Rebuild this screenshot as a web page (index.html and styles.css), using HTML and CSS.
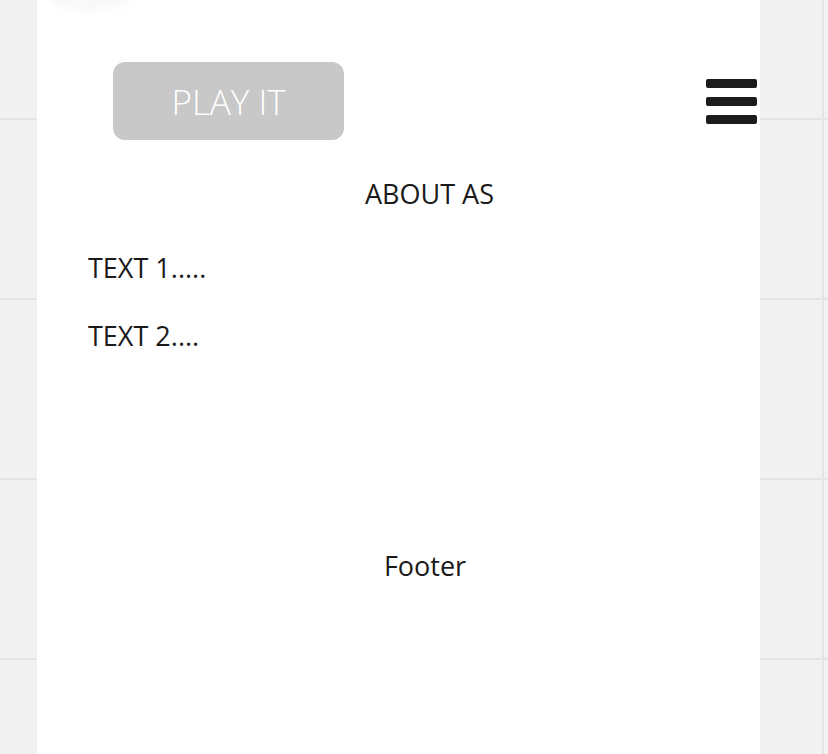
FILE: index.html
```html
<!DOCTYPE html>
<html lang="en">
<head>
<meta charset="utf-8">
<title>About</title>
<link rel="stylesheet" href="styles.css">
</head>
<body>
<div class="page">
  <div class="glow"></div>
  <header class="header">
    <button class="play">PLAY IT</button>
    <div class="burger" aria-label="menu">
      <span class="bar"></span>
      <span class="bar"></span>
      <span class="bar"></span>
    </div>
  </header>
  <main class="content">
    <h1 class="about">ABOUT AS</h1>
    <p class="text text1">TEXT 1.....</p>
    <p class="text text2">TEXT 2....</p>
  </main>
  <footer class="footer">Footer</footer>
</div>
</body>
</html>
```
FILE: styles.css
```css
html, body {
  margin: 0;
  padding: 0;
}
body {
  min-height: 754px;
  background-color: #f1f1f1;
  background-image:
    linear-gradient(to right, transparent 822px, #e4e4e4 822px, #e4e4e4 824px, transparent 824px),
    repeating-linear-gradient(to bottom, transparent 0, transparent 118px, #e4e4e4 118px, #e4e4e4 120px, transparent 120px, transparent 180px);
  font-family: "Open Sans", "Noto Sans", sans-serif;
  color: #1a1a1a;
  overflow: hidden;
}
.page {
  position: relative;
  margin-left: 37px;
  width: 723px;
  min-height: 754px;
  background: #fff;
}
.glow {
  position: absolute;
  left: 12px;
  top: -14px;
  width: 80px;
  height: 24px;
  border-radius: 50%;
  background: #f8f8f8;
  filter: blur(5px);
}
.header {
  display: flex;
  justify-content: space-between;
  align-items: flex-start;
  padding: 62px 3px 0 76px;
}
.play {
  width: 231px;
  height: 78px;
  border: none;
  border-radius: 12px;
  background: #c8c8c8;
  color: #fff;
  font-family: "Open Sans", sans-serif;
  font-size: 35px;
  font-weight: 300;
  display: flex;
  align-items: center;
  justify-content: center;
  padding: 0;
}
.burger {
  margin-top: 17px;
  width: 51px;
  display: flex;
  flex-direction: column;
  gap: 9px;
}
.bar {
  display: block;
  height: 9px;
  border-radius: 2px;
  background: #1c1c1c;
}
.content {
  display: block;
}
.about {
  margin: 36px 0 0;
  padding-left: 62px;
  text-align: center;
  font-size: 27px;
  font-weight: 400;
  line-height: 36px;
}
.text {
  margin: 0;
  padding-left: 51px;
  font-size: 27px;
  line-height: 36px;
}
.text1 {
  margin-top: 38px;
}
.text2 {
  margin-top: 32px;
}
.footer {
  margin-top: 194px;
  padding-left: 53px;
  text-align: center;
  font-size: 27px;
  line-height: 36px;
}
```
